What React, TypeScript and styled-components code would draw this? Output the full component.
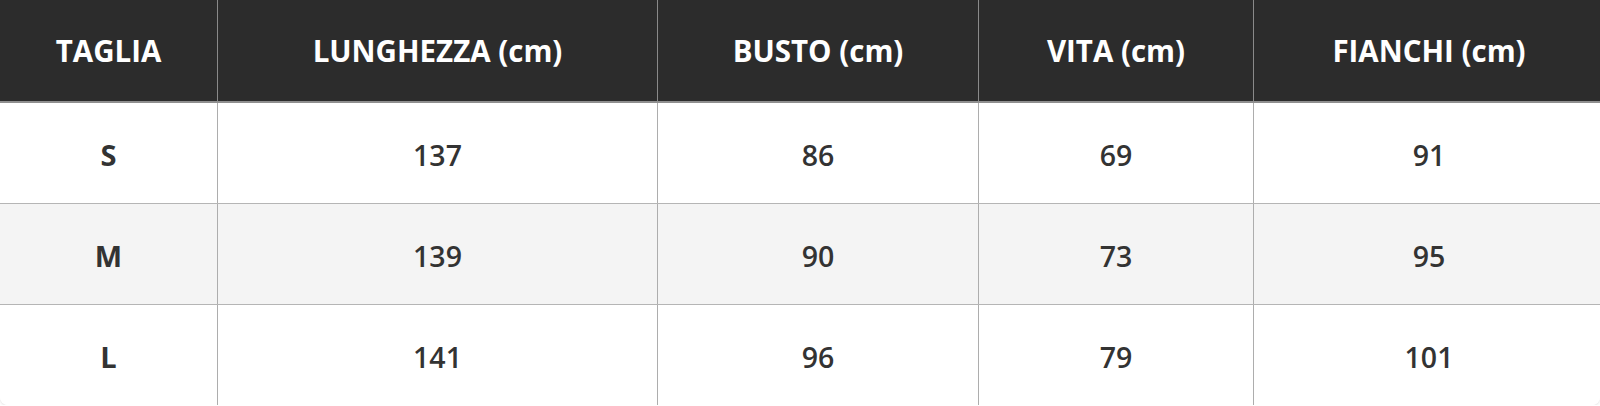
import styled, { createGlobalStyle } from "styled-components";

const GlobalStyle = createGlobalStyle`
  html, body {
    margin: 0;
    padding: 0;
    background: #ffffff;
  }
  body {
    font-family: "Open Sans", "Noto Sans", "Liberation Sans", sans-serif;
  }
`;

const columns = [
  { label: "TAGLIA", width: 217 },
  { label: "LUNGHEZZA (cm)", width: 439 },
  { label: "BUSTO (cm)", width: 320 },
  { label: "VITA (cm)", width: 274 },
  { label: "FIANCHI (cm)", width: 350 },
];

const rows = [
  ["S", "137", "86", "69", "91"],
  ["M", "139", "90", "73", "95"],
  ["L", "141", "96", "79", "101"],
];

const Card = styled.div`
  width: 1600px;
  border-radius: 0 0 8px 8px;
  overflow: hidden;
  box-shadow: 0 1px 3px rgba(0, 0, 0, 0.12);
`;

const Table = styled.table`
  width: 100%;
  border-collapse: collapse;
  table-layout: fixed;
`;

const HeadCell = styled.th<{ $w: number }>`
  width: ${(p) => p.$w}px;
  height: 101px;
  padding: 0;
  background: #2c2c2c;
  color: #ffffff;
  font-size: 29.5px;
  font-weight: 700;
  text-align: center;
  border-left: 1px solid #8a8a8a;
  border-bottom: 2px solid #8f8f8f;
  &:first-child {
    border-left: none;
  }
`;

const Row = styled.tr<{ $alt: boolean }>`
  background: ${(p) => (p.$alt ? "#f4f4f4" : "#ffffff")};
`;

const Cell = styled.td<{ $label?: boolean }>`
  height: 101px;
  padding: 4px 0 0;
  box-sizing: border-box;
  text-align: center;
  color: #333333;
  font-size: ${(p) => (p.$label ? "29px" : "28.5px")};
  font-weight: ${(p) => (p.$label ? 700 : 600)};
  border-left: 1px solid #adadad;
  border-bottom: 1px solid #b5b5b5;
  &:first-child {
    border-left: none;
  }
  tr:last-child > & {
    border-bottom: none;
  }
`;

export default function App() {
  return (
    <>
      <GlobalStyle />
      <Card>
        <Table>
          <thead>
            <tr>
              {columns.map((c) => (
                <HeadCell key={c.label} $w={c.width}>
                  {c.label}
                </HeadCell>
              ))}
            </tr>
          </thead>
          <tbody>
            {rows.map((r, i) => (
              <Row key={r[0]} $alt={i % 2 === 1}>
                {r.map((v, j) => (
                  <Cell key={j} $label={j === 0}>
                    {v}
                  </Cell>
                ))}
              </Row>
            ))}
          </tbody>
        </Table>
      </Card>
    </>
  );
}
